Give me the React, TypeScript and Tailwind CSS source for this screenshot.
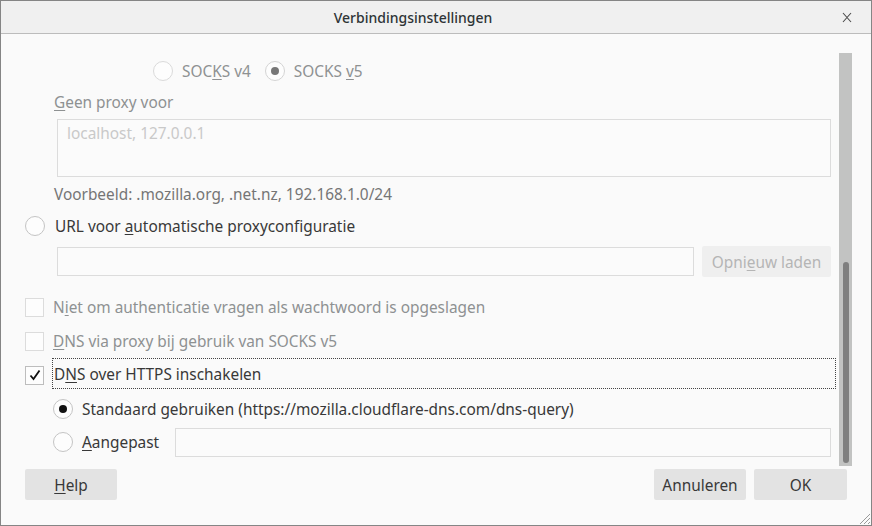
import React from "react";

const font = { fontFamily: '"Noto Sans", "Open Sans", sans-serif' };

function Radio({ checked = false, disabled = false, dot = "#111" }: { checked?: boolean; disabled?: boolean; dot?: string }) {
  return (
    <span
      className={`flex h-[20px] w-[20px] shrink-0 items-center justify-center rounded-full border bg-[#fdfdfd] ${
        disabled ? "border-[#dadada]" : "border-[#c4c4c4]"
      }`}
    >
      {checked && <span className="h-[8px] w-[8px] rounded-full" style={{ background: dot }} />}
    </span>
  );
}

function Check({ checked = false, disabled = false }: { checked?: boolean; disabled?: boolean }) {
  return (
    <span
      className={`flex h-[19px] w-[19px] shrink-0 items-center justify-center border bg-[#fdfdfd] ${
        disabled ? "border-[#dcdcdc]" : "border-[#bdbdbd]"
      }`}
    >
      {checked && (
        <svg width="14" height="14" viewBox="0 0 14 14">
          <path d="M2.5 7.5 L5.5 11 L11.5 2.5" fill="none" stroke="#111" strokeWidth="1.8" />
        </svg>
      )}
    </span>
  );
}

export default function App() {
  return (
    <div
      className="flex h-[526px] w-[872px] flex-col overflow-hidden border border-[#858585] bg-[#fafafa] text-[15.4px] text-[#383838]"
      style={font}
    >
      {/* Title bar */}
      <div className="relative flex h-[33px] shrink-0 items-center justify-center border-b border-[#bcbcbc] bg-[#f0f0f0] pr-[46px]">
        <span className="text-[14px] font-medium text-[#2e3436]">Verbindingsinstellingen</span>
        <svg className="absolute right-[19px] top-[11px]" width="10" height="11" viewBox="0 0 10 11">
          <path d="M1 1 L9 10 M9 1 L1 10" stroke="#4a4a4a" strokeWidth="1.1" />
        </svg>
      </div>

      {/* Body */}
      <div className="flex h-[432px] shrink-0">
        <div className="flex flex-1 flex-col pl-[24px] pr-[3px]">
          <div className="h-[23px]" />
          {/* SOCKS */}
          <div className="flex h-[28px] items-center pl-[128px] text-[#8e9192]">
            <Radio disabled />
            <span className="ml-[9px] pt-[2px]">
              SOC<u className="underline-offset-2">K</u>S v4
            </span>
            <span className="ml-[14px]">
              <span className="flex h-[20px] w-[20px] items-center justify-center rounded-full border border-[#d4d4d4] bg-[#fdfdfd]">
                <span className="h-[8px] w-[8px] rounded-full bg-[#777]" />
              </span>
            </span>
            <span className="ml-[9px] pt-[2px]">
              SOCKS <u className="underline-offset-2">v</u>5
            </span>
          </div>
          {/* Geen proxy */}
          <div className="flex h-[34px] items-center pl-[29px] text-[#8e9192]">
            <span className="pt-[2px]">
              <u className="underline-offset-2">G</u>een proxy voor
            </span>
          </div>
          <div className="ml-[32px] mr-[5px] h-[58px] border border-[#dcdcdc] bg-[#fbfbfb] px-[9px] pt-[2px] text-[#c9c9c9]">
            localhost, 127.0.0.1
          </div>
          <div className="flex h-[34px] items-center pl-[29px] text-[#757575]">
            <span className="pt-[2px]">Voorbeeld: .mozilla.org, .net.nz, 192.168.1.0/24</span>
          </div>
          {/* URL */}
          <div className="flex h-[30px] items-center">
            <Radio />
            <span className="ml-[10px] pt-[2px]">
              URL voor <u className="underline-offset-2">a</u>utomatische proxyconfiguratie
            </span>
          </div>
          <div className="mt-[5px] mr-[5px] flex h-[31px] items-center pl-[32px]">
            <div className="h-[29px] flex-1 border border-[#dcdcdc] bg-[#fbfbfb]" />
            <div className="ml-[8px] flex h-[31px] w-[129px] items-center justify-center rounded-[2px] bg-[#efefef] text-[#b5b5b5]">
              <span className="pt-[2px]">
                Opni<u className="underline-offset-2">e</u>uw laden
              </span>
            </div>
          </div>
          <div className="h-[13px]" />
          {/* checkboxes */}
          <div className="flex h-[34px] items-center text-[#8e9192]">
            <Check disabled />
            <span className="ml-[9px] pt-[2px]">
              N<u className="underline-offset-2">i</u>et om authenticatie vragen als wachtwoord is opgeslagen
            </span>
          </div>
          <div className="flex h-[34px] items-center text-[#8e9192]">
            <Check disabled />
            <span className="ml-[9px] pt-[2px]">
              <u className="underline-offset-2">D</u>NS via proxy bij gebruik van SOCKS v5
            </span>
          </div>
          <div className="flex h-[34px] items-center">
            <Check checked />
            <span className="ml-[8px] flex h-[31px] flex-1 items-center self-start border border-dotted border-[#444] pl-[1px] pt-[3px]">
              D<u className="underline-offset-2">N</u>S over HTTPS inschakelen
            </span>
          </div>
          <div className="flex h-[33px] items-center pl-[28px]">
            <Radio checked dot="#111" />
            <span className="ml-[9px] pt-[2px]">Standaard gebruiken (https://mozilla.cloudflare-dns.com/dns-query)</span>
          </div>
          <div className="mr-[5px] flex h-[34px] items-center pl-[28px]">
            <Radio />
            <span className="ml-[9px] pt-[2px]">
              <u className="underline-offset-2">A</u>angepast
            </span>
            <div className="ml-[16px] h-[29px] flex-1 border border-[#dcdcdc] bg-[#fbfbfb]" />
          </div>
        </div>
        {/* scrollbar */}
        <div className="mt-[19px] mr-[19px] flex w-[13px] flex-col bg-[#c2c3c2]">
          <div className="h-[209px]" />
          <div className="mx-auto h-[201px] w-[6px] rounded-full bg-[#7f7f7f]" />
        </div>
      </div>

      {/* Footer */}
      <div className="relative flex flex-1 items-start px-[24px] pt-[3px] text-[#383838]">
        <div className="flex h-[31px] w-[92px] items-center justify-center rounded-[2px] bg-[#e3e3e3]">
          <span className="pt-[2px]">
            <u className="underline-offset-2">H</u>elp
          </span>
        </div>
        <div className="flex-1" />
        <div className="flex h-[31px] w-[92px] items-center justify-center rounded-[2px] bg-[#e3e3e3]">
          <span className="pt-[2px]">Annuleren</span>
        </div>
        <div className="ml-[8px] flex h-[31px] w-[93px] items-center justify-center rounded-[2px] bg-[#e3e3e3]">
          <span className="pt-[2px]">OK</span>
        </div>
        <svg className="absolute bottom-0 right-0" width="14" height="14" viewBox="0 0 14 14">
          <path d="M13 3 L3 13 M13 7 L7 13 M13 11 L11 13" stroke="#9a9a9a" strokeWidth="1" />
        </svg>
      </div>
    </div>
  );
}
